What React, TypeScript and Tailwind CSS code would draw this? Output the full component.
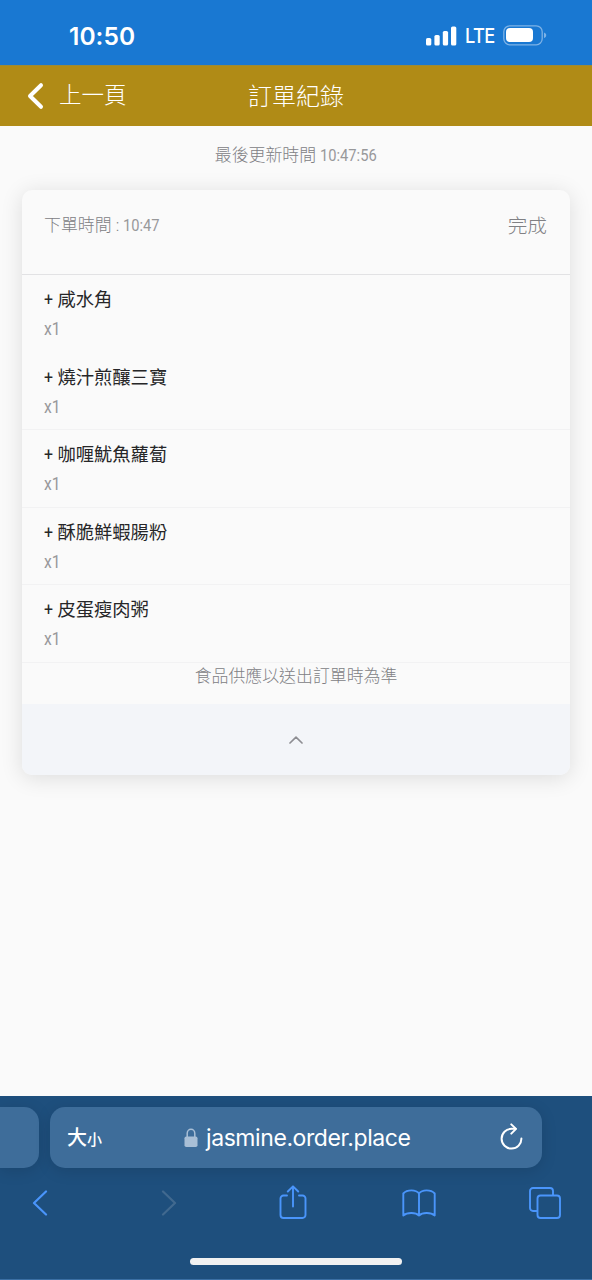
import React from 'react';

const items = ['咸水角', '燒汁煎釀三寶', '咖喱魷魚蘿蔔', '酥脆鮮蝦腸粉', '皮蛋瘦肉粥'];

function StatusBar() {
    return (
        <div className="h-[65px] bg-[#1978d2] flex items-center justify-between pl-[69px] pr-[46px] pt-[6px] font-['Inter',sans-serif] text-white">
            <span className="text-[24.5px] leading-[30px] font-semibold tracking-[0.05px]">10:50</span>
            <div className="flex items-center">
                <svg width="31" height="20" viewBox="0 0 31 20" fill="currentColor">
                    <rect x="0" y="12" width="5.3" height="7.5" rx="1.6" />
                    <rect x="8.4" y="9" width="5.3" height="10.5" rx="1.6" />
                    <rect x="16.8" y="5" width="5.3" height="14.5" rx="1.6" />
                    <rect x="25" y="0.5" width="5.3" height="19" rx="1.6" />
                </svg>
                <span className="ml-[8px] w-[30px] origin-left scale-x-[.91] text-[20px] leading-[20px] font-medium tracking-[-0.6px] mt-[1px]">LTE</span>
                <svg className="ml-[8px] -mr-px" width="44" height="21" viewBox="0 0 44 21" fill="none">
                    <rect x="0.8" y="0.8" width="38.4" height="19" rx="6" stroke="#7db2e6" strokeWidth="1.3" />
                    <rect x="3" y="3" width="27" height="14" rx="4" fill="#fff" />
                    <path d="M41 7.5c1.9.8 2.2 1.8 2.2 2.8s-.3 2-2.2 2.8z" fill="#7db2e6" />
                </svg>
            </div>
        </div>
    );
}

function TitleBar() {
    return (
        <header className="h-[61px] bg-[#b08b16] border-t border-[#9a8a36] grid grid-cols-3 items-center text-white font-light">
            <div className="flex items-center pl-[27px]">
                <svg width="17" height="28" viewBox="0 0 17 28" fill="none" stroke="currentColor" strokeWidth="4" strokeLinecap="round" strokeLinejoin="round">
                    <path d="M14 3.2L3 14l11 10.8" />
                </svg>
                <span className="ml-[15px] text-[22.5px] leading-[30px] -mt-[2px]">上一頁</span>
            </div>
            <h1 className="text-center text-[24px] leading-[30px] font-light mt-[2px]">訂單紀錄</h1>
        </header>
    );
}

function OrderCard() {
    return (
        <section className="mx-[22px] rounded-[10px] bg-[#fafafa] overflow-hidden shadow-[0_3px_22px_rgba(0,0,0,0.12)]">
            <div className="h-[85px] border-b border-[#e2e2e4] flex justify-between px-[22px] pt-[22px] text-[#808084] font-light">
                <span className="text-[16.9px] leading-[26px]">
                    下單時間 :{' '}
                    <span className="inline-block w-[37px] whitespace-nowrap origin-left scale-x-[.87] font-normal text-[#98989a]">10:47</span>
                </span>
                <span className="mr-px text-[19.7px] leading-[29px]">完成</span>
            </div>

            <ul>
                {items.map((item, i) => (
                    <li key={item} className={`h-[77.6px] pl-[22px] pt-[11px] border-b ${i === 0 ? 'border-transparent' : 'border-[#f2f2f3]'}`}>
                        <p className="flex text-[18.3px] leading-[28px] text-[#262628]">
                            <span className="w-[13.5px] origin-left scale-x-[.87]">+</span>
                            {item}
                        </p>
                        <p className="text-[18px] leading-[28px] mt-px text-[#98989a] origin-left scale-x-[.87]">x1</p>
                    </li>
                ))}
            </ul>

            <p className="h-[41px] text-center text-[16.9px] leading-[26px] text-[#808084] font-light">食品供應以送出訂單時為準</p>
            <button className="w-full h-[71px] bg-[#f3f5f9] flex items-center justify-center pt-px">
                <svg width="14" height="8" viewBox="0 0 14 8" fill="none" stroke="#8e8e93" strokeWidth="1.7" strokeLinecap="round" strokeLinejoin="round">
                    <path d="M1 7l6-5.8L13 7" />
                </svg>
            </button>
        </section>
    );
}

function BrowserBar() {
    return (
        <footer className="h-[184px] bg-[#1e4f7d] border-b border-[#3b6fa3] flex flex-col overflow-hidden">
            <div className="mt-[11px] flex gap-[11px]">
                <div className="w-[39px] h-[61px] rounded-r-[15px] bg-[#3e6d9a] shadow-[0_3px_16px_rgba(0,0,0,0.12)]" />
                <div className="w-[492px] h-[61px] rounded-[15px] bg-[#3e6d9a] shadow-[0_3px_16px_rgba(0,0,0,0.12)] flex items-center text-white">
                    <span className="ml-[17px] w-[36px] flex items-baseline font-medium whitespace-nowrap">
                        <span className="text-[20px]">大</span>
                        <span className="text-[15px]">小</span>
                    </span>
                    <svg className="ml-[81px]" width="14" height="20" viewBox="0 0 14 20" fill="none">
                        <path d="M3.200 9.500V5.400a3.800 4.200 0 0 1 7.600 0v4.100" stroke="#a9bfd6" strokeWidth="1.5" />
                        <rect x="0.5" y="8.5" width="13" height="10.5" rx="1.8" fill="#a9bfd6" />
                    </svg>
                    <span className="ml-[8px] w-[205px] whitespace-nowrap font-['Inter',sans-serif] text-[23px] leading-[30px] tracking-[-0.42px] mt-px">jasmine.order.place</span>
                    <svg className="ml-[89px] -mt-[2px]" width="23" height="27" viewBox="0 0 23 27" fill="none" stroke="currentColor" strokeWidth="2" strokeLinecap="round" strokeLinejoin="round">
                        <path d="M21.400 15.500A9.900 9.900 0 1 1 11.500 5.800h4" />
                        <path d="M11.300 1.400l4.700 4.500-4.700 4.700" />
                    </svg>
                </div>
            </div>

            <nav className="h-[70px] w-[630px] -ml-[22px] grid grid-cols-5 items-center justify-items-center text-[#4a95fb]">
                <svg className="mr-[2px]" width="16" height="26" viewBox="0 0 16 26" fill="none" stroke="currentColor" strokeWidth="2.2" strokeLinecap="round" strokeLinejoin="round">
                    <path d="M14 1.5L2 13l12 11.5" />
                </svg>
                <svg className="ml-[4px] text-[#41698f]" width="16" height="26" viewBox="0 0 16 26" fill="none" stroke="currentColor" strokeWidth="2.2" strokeLinecap="round" strokeLinejoin="round">
                    <path d="M2 1.5L14 13 2 24.5" />
                </svg>
                <svg className="mb-[2px]" width="28" height="34" viewBox="0 0 28 34" fill="none" stroke="currentColor" strokeWidth="1.9" strokeLinecap="round" strokeLinejoin="round">
                    <path d="M8 10.500H4.500a3 3 0 0 0-3 3v16.500a3 3 0 0 0 3 3h19a3 3 0 0 0 3-3V13.500a3 3 0 0 0-3-3H20" />
                    <path d="M14 21.500V1.500M8.800 6.500L14 1.300l5.200 5.200" />
                </svg>
                <svg width="34" height="28" viewBox="0 0 34 28" fill="none" stroke="currentColor" strokeWidth="1.9" strokeLinecap="round" strokeLinejoin="round">
                    <path d="M17 4.500C14 .3 5 .3 1.300 4.500v22C5 23.300 13.500 23 17 26.500c3.500-3.500 12-3.200 15.700 0v-22C29 .3 20 .3 17 4.500zv22" />
                </svg>
                <svg className="mr-px" width="32" height="32" viewBox="0 0 32 32" fill="none" stroke="currentColor" strokeWidth="1.9" strokeLinejoin="round">
                    <path d="M8.500 24H4a3 3 0 0 1-3-3V4a3 3 0 0 1 3-3h17a3 3 0 0 1 3 3v4.500" />
                    <rect x="8.500" y="8.500" width="22.500" height="22.500" rx="3" />
                </svg>
            </nav>

            <div className="mt-[20px] mx-auto w-[212px] h-[7px] rounded-full bg-[#f1f1f1]" />
        </footer>
    );
}

export default function App() {
    return (
        <div className="w-[592px] h-[1280px] flex flex-col overflow-hidden bg-[#fafafa] font-['Roboto','Noto_Sans_CJK_TC',sans-serif]">
            <StatusBar />
            <TitleBar />
            <main className="flex-1">
                <p className="h-[64px] pt-[16px] text-center text-[16.9px] leading-[26px] text-[#808084] font-light">
                    最後更新時間{' '}
                    <span className="inline-block w-[57px] text-left whitespace-nowrap origin-left scale-x-[.87] font-normal text-[#98989a]">10:47:56</span>
                </p>
                <OrderCard />
            </main>
            <BrowserBar />
        </div>
    );
}
